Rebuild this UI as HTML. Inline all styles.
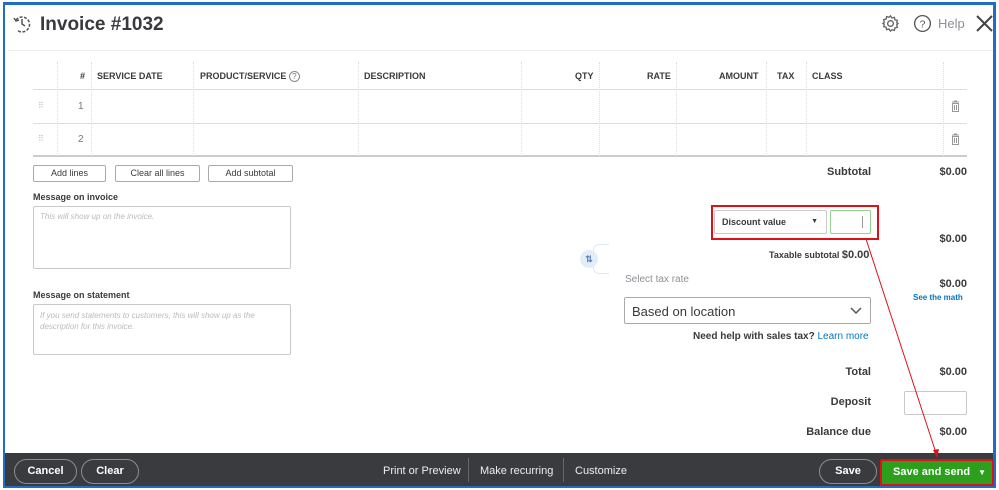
<!DOCTYPE html>
<html><head><meta charset="utf-8"><style>
*{margin:0;padding:0;box-sizing:border-box}
body{width:999px;height:490px;background:#fff;font-family:"Liberation Sans",sans-serif;position:relative;overflow:hidden;color:#393a3d}
.frame{position:absolute;left:3px;top:2px;width:993px;height:486px;border:2px solid #1e6fc4;border-top-width:3px;border-right-width:3px}
.a{position:absolute}
.th{position:absolute;top:71px;font-size:9px;font-weight:bold;color:#393a3d}
.vl{position:absolute;top:62px;height:94px;border-left:1px dotted #ddd}
.hl{position:absolute;left:33px;width:934px;border-top:1px solid #ddd}
.btn{position:absolute;top:165px;height:17px;border:1px solid #aaa;border-radius:2px;font-size:9px;text-align:center;line-height:15px;color:#393a3d;background:#fff}
.lbl{position:absolute;font-size:9px;font-weight:bold}
.box{position:absolute;border:1px solid #c9c9c9;border-radius:2px;background:#fff}
.r{position:absolute;font-size:11px;font-weight:bold;text-align:right}
.fb{position:absolute;color:#eee;font-size:11px}
.pill{position:absolute;top:459px;height:25px;border:1px solid #8d8d8d;border-radius:13px;color:#fff;font-size:11px;font-weight:bold;text-align:center;line-height:23px}
</style></head><body>
<div class="frame"></div>
<svg class="a" style="left:12px;top:14px" width="20" height="20" viewBox="0 0 20 20" fill="none" stroke="#555" stroke-width="1.5"><path d="M4 6 A7.5 7.5 0 1 1 5 16" stroke-dasharray="3 1.5"/><path d="M10 5v5l3 2"/><path d="M2 4l2 3 3-1"/></svg>
<div class="a" style="left:40px;top:14px;font-size:19px;font-weight:bold;color:#393a3d">Invoice #1032</div>
<svg class="a" style="left:881px;top:14px" width="19" height="19" viewBox="0 0 20 20" fill="none" stroke="#666" stroke-width="1.4"><circle cx="10" cy="10" r="3"/><path d="M10 2l1.5 2.2 2.6-.7.5 2.6 2.6.6-.7 2.6L18 10l-1.5 1.5.7 2.6-2.6.6-.5 2.6-2.6-.7L10 18l-1.5-2.2-2.6.7-.5-2.6-2.6-.6.7-2.6L2 10l1.5-1.5-.7-2.6 2.6-.6.5-2.6 2.6.7z"/></svg>
<svg class="a" style="left:913px;top:14px" width="19" height="19" viewBox="0 0 20 20" fill="none" stroke="#555" stroke-width="1.4"><circle cx="10" cy="10" r="8.3"/><text x="10" y="14" font-size="11" text-anchor="middle" fill="#555" stroke="none" font-family="Liberation Sans">?</text></svg>
<div class="a" style="left:938px;top:16px;font-size:13px;color:#8d9096">Help</div>
<svg class="a" style="left:975px;top:14px" width="19" height="19" viewBox="0 0 19 19" stroke="#444" stroke-width="2"><path d="M2 2l15 15M17 2L2 17"/></svg>
<div class="a" style="left:8px;top:50px;width:985px;border-top:1px solid #eee"></div>
<div class="hl" style="top:89px"></div>
<div class="hl" style="top:123px"></div>
<div class="hl" style="top:155px;border-top:2px solid #ccc"></div>
<div class="vl" style="left:57px"></div><div class="vl" style="left:91px"></div><div class="vl" style="left:193px"></div><div class="vl" style="left:358px"></div><div class="vl" style="left:521px"></div><div class="vl" style="left:599px"></div><div class="vl" style="left:676px"></div><div class="vl" style="left:766px"></div><div class="vl" style="left:806px"></div><div class="vl" style="left:943px"></div>
<div class="th" style="left:80px">#</div>
<div class="th" style="left:97px">SERVICE DATE</div>
<div class="th" style="left:200px">PRODUCT/SERVICE <span style="display:inline-block;width:11px;height:11px;border:1px solid #888;border-radius:50%;font-size:8px;font-weight:normal;text-align:center;line-height:9px;color:#777">?</span></div>
<div class="th" style="left:364px">DESCRIPTION</div>
<div class="th" style="left:575px">QTY</div>
<div class="th" style="left:647px">RATE</div>
<div class="th" style="left:719px">AMOUNT</div>
<div class="th" style="left:777px">TAX</div>
<div class="th" style="left:812px">CLASS</div>
<div class="a" style="left:38px;top:101px;font-size:8px;color:#bbb">⠿</div>
<div class="a" style="left:38px;top:134px;font-size:8px;color:#bbb">⠿</div>
<div class="a" style="left:78px;top:101px;font-size:10px;color:#777">1</div>
<div class="a" style="left:78px;top:134px;font-size:10px;color:#777">2</div>
<svg class="a" style="left:951px;top:100px" width="9" height="12" viewBox="0 0 9 12" fill="none" stroke="#999"><path d="M1 2h7M3 1h3M1.5 3.5h6v8h-6zM3.5 5v5M5.5 5v5"/></svg>
<svg class="a" style="left:951px;top:133px" width="9" height="12" viewBox="0 0 9 12" fill="none" stroke="#999"><path d="M1 2h7M3 1h3M1.5 3.5h6v8h-6zM3.5 5v5M5.5 5v5"/></svg>
<div class="btn" style="left:33px;width:73px">Add lines</div>
<div class="btn" style="left:115px;width:85px">Clear all lines</div>
<div class="btn" style="left:208px;width:85px">Add subtotal</div>
<div class="lbl" style="left:33px;top:192px">Message on invoice</div>
<div class="box" style="left:33px;top:206px;width:258px;height:63px"><div style="font-size:8px;color:#bbb;font-style:italic;padding:5px 6px">This will show up on the invoice.</div></div>
<div class="lbl" style="left:33px;top:290px">Message on statement</div>
<div class="box" style="left:33px;top:304px;width:258px;height:51px"><div style="font-size:8px;color:#bbb;font-style:italic;padding:5px 6px;line-height:11px">If you send statements to customers, this will show up as the description for this invoice.</div></div>
<div class="r" style="left:780px;top:166px;width:91px">Subtotal</div>
<div class="r" style="left:900px;top:166px;width:67px">$0.00</div>
<div class="a" style="left:711px;top:205px;width:168px;height:35px;border:2px solid #e0101a"></div>
<div class="box" style="left:714px;top:210px;width:113px;height:24px;font-size:9px;font-weight:bold;padding:6px 0 0 7px">Discount value<span style="position:absolute;right:8px;font-size:7px;top:7px">▼</span></div>
<div class="box" style="left:830px;top:210px;width:41px;height:24px;border-color:#8fd38f"><div style="position:absolute;right:7px;top:5px;height:12px;border-left:1px solid #999"></div></div>
<div class="r" style="left:900px;top:233px;width:67px">$0.00</div>
<div class="a" style="left:769px;top:249px;font-size:9px;font-weight:bold">Taxable subtotal <span style="font-size:11px">$0.00</span></div>
<div class="a" style="left:593px;top:244px;width:16px;height:30px;border:1px solid #dfe8f2;border-right:none;border-radius:6px 0 0 6px"></div>
<div class="a" style="left:580px;top:250px;width:18px;height:18px;border-radius:50%;background:#e3edf8;color:#5b7fb0;font-size:9px;font-weight:bold;text-align:center;line-height:18px">⇅</div>
<div class="a" style="left:625px;top:274px;font-size:10px;color:#8d9096">Select tax rate</div>
<div class="box" style="left:624px;top:297px;width:247px;height:27px;border-color:#aaa;font-size:13px;padding:6px 0 0 7px;color:#393a3d">Based on location
<svg style="position:absolute;right:8px;top:9px" width="12" height="8" viewBox="0 0 12 8" fill="none" stroke="#555" stroke-width="1.5"><path d="M1 1l5 5 5-5"/></svg></div>
<div class="a" style="left:693px;top:331px;font-size:10px;font-weight:bold">Need help with sales tax? <span style="color:#0077c5;font-weight:normal">Learn more</span></div>
<div class="r" style="left:900px;top:278px;width:67px">$0.00</div>
<div class="a" style="left:913px;top:293px;font-size:8px;font-weight:bold;color:#0077c5">See the math</div>
<div class="r" style="left:780px;top:366px;width:91px">Total</div>
<div class="r" style="left:900px;top:366px;width:67px">$0.00</div>
<div class="r" style="left:780px;top:396px;width:91px">Deposit</div>
<div class="box" style="left:904px;top:391px;width:63px;height:24px"></div>
<div class="r" style="left:770px;top:426px;width:101px">Balance due</div>
<div class="r" style="left:900px;top:426px;width:67px">$0.00</div>
<div class="a" style="left:5px;top:453px;width:988px;height:33px;background:#3a3b3e"></div>
<div class="pill" style="left:14px;width:63px">Cancel</div>
<div class="pill" style="left:81px;width:58px">Clear</div>
<div class="fb" style="left:383px;top:465px">Print or Preview</div>
<div class="a" style="left:468px;top:458px;height:24px;border-left:1px solid #666"></div>
<div class="fb" style="left:480px;top:465px">Make recurring</div>
<div class="a" style="left:563px;top:458px;height:24px;border-left:1px solid #666"></div>
<div class="fb" style="left:575px;top:465px">Customize</div>
<div class="pill" style="left:819px;width:58px">Save</div>
<div class="a" style="left:880px;top:459px;width:114px;height:27px;border:2px solid #e0101a;background:#2ca01c;color:#fff;font-size:11px;font-weight:bold;line-height:23px;padding-left:11px">Save and send<span style="position:absolute;right:6px;font-size:8px">▼</span></div>
<svg class="a" style="left:0;top:0" width="999" height="490"><path d="M866 239L937 456" stroke="#e0101a" stroke-width="1"/><path d="M933 450l4 8 2-9z" fill="#e0101a"/></svg>
</body></html>
